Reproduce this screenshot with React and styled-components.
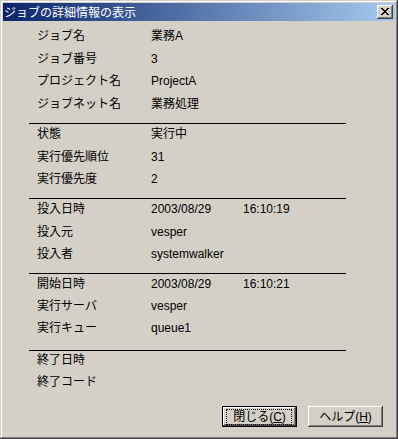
import React from 'react';
import styled, { createGlobalStyle } from 'styled-components';

const Global = createGlobalStyle`
  html, body { margin: 0; padding: 0; background: #d4d0c8; }
  body {
    font-family: "Liberation Sans", "Noto Sans CJK JP", sans-serif;
    font-size: 12px;
    color: #000;
  }
`;

const Window = styled.div`
  width: 398px;
  height: 439px;
  box-sizing: border-box;
  padding: 3px;
  background: #d4d0c8;
  box-shadow: inset -1px -1px #404040, inset 1px 1px #d4d0c8,
    inset -2px -2px #808080, inset 2px 2px #fff;
  display: flex;
  flex-direction: column;
`;

const TitleBar = styled.div`
  height: 18px;
  flex: none;
  display: flex;
  align-items: flex-start;
  justify-content: space-between;
  padding: 0 2px 0 1px;
  background: linear-gradient(to right, #0a246a, #a6caf0);
`;

const Title = styled.span`
  color: #fff;
  font-family: "Noto Sans CJK JP", sans-serif;
  font-size: 12px;
  line-height: 17px;
  white-space: nowrap;
`;

const CaptionButton = styled.button`
  margin: 2px 0 0 0;
  width: 16px;
  height: 14px;
  box-sizing: border-box;
  padding: 3px 0 0 4px;
  border: none;
  background: #d4d0c8;
  display: flex;
  align-items: flex-start;
  justify-content: flex-start;
  box-shadow: inset -1px -1px #404040, inset 1px 1px #fff,
    inset -2px -2px #808080, inset 2px 2px #d4d0c8;
`;

const Body = styled.div`
  flex: 1;
  display: flex;
  flex-direction: column;
`;

const Section = styled.div`
  width: 317px;
  margin-left: 26px;
  border-top: ${(p) => (p.$rule ? '1px solid #000' : 'none')};
  padding-bottom: ${(p) => p.$bottom}px;
`;

const Rows = styled.div`
  display: flex;
  flex-direction: column;
  gap: ${(p) => p.$gap}px;
  margin-top: ${(p) => p.$offset}px;
  padding-left: 8px;
`;

const Row = styled.div`
  display: flex;
  height: 20px;
  line-height: 20px;
  white-space: nowrap;
`;

const Label = styled.span`
  width: 114px;
  flex: none;
`;

const Value = styled.span`
  width: 92px;
  flex: none;
`;

const ButtonBar = styled.div`
  margin-top: 14.5px;
  display: flex;
  justify-content: flex-end;
  gap: 11px;
  padding-right: 12px;
`;

const PushButton = styled.button`
  position: relative;
  width: 75px;
  height: 21px;
  box-sizing: border-box;
  padding: 0;
  margin: 0;
  border: none;
  background: #d4d0c8;
  color: #000;
  font-family: "Liberation Sans", "Noto Sans CJK JP", sans-serif;
  font-size: 12px;
  line-height: 14px;
  display: flex;
  align-items: center;
  justify-content: center;
  box-shadow: ${(p) =>
    p.$default
      ? 'inset 0 0 0 1px #000, inset -2px -2px #404040, inset 2px 2px #fff, inset -3px -3px #808080'
      : 'inset -1px -1px #404040, inset 1px 1px #fff, inset -2px -2px #808080, inset 2px 2px #d4d0c8'};
`;

const FocusRing = styled.span`
  position: absolute;
  top: 3px;
  bottom: 2px;
  left: 4px;
  right: 5px;
  border: 1px dotted #000;
  pointer-events: none;
`;

const CloseGlyph = () => (
  <svg width="8" height="7" viewBox="0 0 8 7" shapeRendering="crispEdges">
    <path
      fill="#000"
      d="M0 0h2v1H0zM6 0h2v1H6zM1 1h2v1H1zM5 1h2v1H5zM2 2h4v1H2zM3 3h2v1H3zM2 4h4v1H2zM1 5h2v1H1zM5 5h2v1H5zM0 6h2v1H0zM6 6h2v1H6z"
    />
  </svg>
);

const sections = [
  {
    rule: false, offset: 5, gap: 2.5, bottom: 9.5,
    rows: [
      ['ジョブ名', '業務A'],
      ['ジョブ番号', '3'],
      ['プロジェクト名', 'ProjectA'],
      ['ジョブネット名', '業務処理'],
    ],
  },
  {
    rule: true, offset: 0, gap: 2.5, bottom: 9,
    rows: [
      ['状態', '実行中'],
      ['実行優先順位', '31'],
      ['実行優先度', '2'],
    ],
  },
  {
    rule: true, offset: 0, gap: 2.5, bottom: 9,
    rows: [
      ['投入日時', '2003/08/29', '16:10:19'],
      ['投入元', 'vesper'],
      ['投入者', 'systemwalker'],
    ],
  },
  {
    rule: true, offset: 0, gap: 2, bottom: 12,
    rows: [
      ['開始日時', '2003/08/29', '16:10:21'],
      ['実行サーバ', 'vesper'],
      ['実行キュー', 'queue1'],
    ],
  },
  {
    rule: true, offset: -1.5, gap: 2, bottom: 0,
    rows: [
      ['終了日時', ''],
      ['終了コード', ''],
    ],
  },
];

export default function App() {
  return (
    <>
      <Global />
      <Window>
        <TitleBar>
          <Title>ジョブの詳細情報の表示</Title>
          <CaptionButton aria-label="閉じる">
            <CloseGlyph />
          </CaptionButton>
        </TitleBar>
        <Body>
          {sections.map((s, i) => (
            <Section key={i} $rule={s.rule} $bottom={s.bottom}>
              <Rows $offset={s.offset} $gap={s.gap}>
                {s.rows.map(([label, value, extra]) => (
                  <Row key={label}>
                    <Label>{label}</Label>
                    <Value>{value}</Value>
                    {extra && <span>{extra}</span>}
                  </Row>
                ))}
              </Rows>
            </Section>
          ))}
          <ButtonBar>
            <PushButton $default>
              <FocusRing />
              閉じる(<u>C</u>)
            </PushButton>
            <PushButton>
              ヘルプ(<u>H</u>)
            </PushButton>
          </ButtonBar>
        </Body>
      </Window>
    </>
  );
}
